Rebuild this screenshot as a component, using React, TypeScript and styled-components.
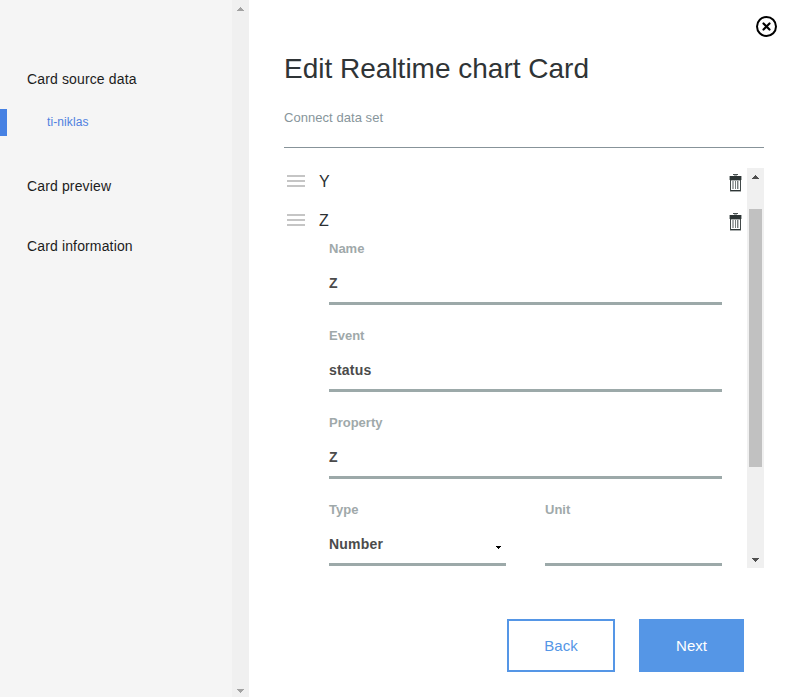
import React from "react";
import styled, { createGlobalStyle } from "styled-components";

const Global = createGlobalStyle`
  * { box-sizing: border-box; }
  html, body { margin: 0; padding: 0; overflow: hidden; background: #fff; }
  body { font-family: Arial, "Liberation Sans", sans-serif; color: #222; }
`;

const Page = styled.div`
  display: flex;
  width: 798px;
  height: 697px;
  overflow: hidden;
`;

const Sidebar = styled.aside`
  width: 232px;
  background: #f5f5f5;
  padding-top: 64px;
`;

const NavItem = styled.div<{ $gap?: number }>`
  height: 30px;
  line-height: 30px;
  padding-left: 27px;
  margin-bottom: ${(p) => p.$gap ?? 0}px;
  font-size: 14px;
  letter-spacing: 0.14px;
  color: #1c1c1c;
`;

const SubItem = styled.div`
  height: 27px;
  line-height: 27px;
  border-left: 7px solid #4681e3;
  padding-left: 40px;
  margin-bottom: 35px;
  font-size: 12px;
  letter-spacing: 0.1px;
  color: #4f80e0;
`;

const Track = styled.div`
  width: 17px;
  flex: none;
  display: flex;
  flex-direction: column;
  justify-content: space-between;
  background: #f0f0f0;
`;

const ArrowBox = styled.div<{ $top: number }>`
  height: 17px;
  padding: ${(p) => p.$top}px 5px 0 5px;
  line-height: 0;
`;

const Thumb = styled.div`
  width: 13px;
  height: 258px;
  margin: 24px 0 0 2px;
  background: #c1c1c1;
`;

const Spacer = styled.div`
  flex: 1;
`;

const Main = styled.main`
  flex: 1;
  display: flex;
  flex-direction: column;
  padding: 15px 20px 0 35px;
`;

const CloseButton = styled.button`
  align-self: flex-end;
  width: 23px;
  height: 23px;
  padding: 0;
  border: 0;
  background: none;
  line-height: 0;
`;

const Title = styled.h1`
  margin: 11px 0 0;
  height: 39px;
  line-height: 40px;
  font-size: 28px;
  font-weight: 400;
  color: #2f3436;
`;

const Caption = styled.div`
  width: 480px;
  height: 60px;
  padding-top: 22px;
  line-height: 16px;
  font-size: 13px;
  letter-spacing: 0.05px;
  color: #87959b;
  border-bottom: 1px solid #879399;
`;

const Panel = styled.section`
  display: flex;
  width: 480px;
  height: 400px;
  margin-top: 20px;
`;

const Content = styled.div`
  flex: 1;
  overflow: hidden;
`;

const Row = styled.div`
  display: flex;
  align-items: center;
  height: 26px;
  margin-bottom: 13px;
  padding: 0 5px 0 3px;
  font-size: 16px;
  color: #2b3033;

  & + & { margin-bottom: 0; }
  svg { display: block; }
`;

const RowName = styled.span`
  flex: 1;
  padding: 2px 0 0 14px;
`;

const TrashIcon = styled.svg`
  margin-top: 4px;
`;

const Form = styled.div`
  padding: 0 25px 0 45px;
`;

const Pair = styled.div`
  display: grid;
  grid-template-columns: 177px 177px;
  gap: 39px;
`;

const Field = styled.div`
  height: 87px;
  padding-top: 7px;
`;

const Label = styled.label`
  display: block;
  height: 17px;
  line-height: 17px;
  font-size: 13px;
  font-weight: 700;
  color: #9fa9aa;
`;

const Value = styled.div`
  display: flex;
  align-items: center;
  justify-content: space-between;
  height: 48px;
  padding-top: 6px;
  border-bottom: 3px solid #9ca9a9;
  font-size: 14px;
  font-weight: 700;
  letter-spacing: 0.2px;
  color: #4b4b4b;

  svg { margin: 8px 4px 0 0; }
`;

const Actions = styled.div`
  display: flex;
  justify-content: flex-end;
  gap: 24px;
  margin-top: 51px;
  padding-right: 34px;
`;

const Button = styled.button<{ $primary?: boolean }>`
  width: ${(p) => (p.$primary ? 105 : 108)}px;
  height: 53px;
  padding: 0;
  border: 2px solid #5596e6;
  background: ${(p) => (p.$primary ? "#5596e6" : "#fff")};
  color: ${(p) => (p.$primary ? "#fff" : "#5596e6")};
  font: 15px Arial, "Liberation Sans", sans-serif;
`;

const Arrow = ({ down, color, top = 6 }: { down?: boolean; color: string; top?: number }) => (
  <ArrowBox $top={top}>
    <svg width="7" height="4" shapeRendering="crispEdges" fill={color}>
      <path d={down ? "M0 0h7v1h-1v1h-1v1h-1v1h-1v-1h-1v-1h-1v-1h-1z" : "M3 0h1v1h1v1h1v1h1v1h-7v-1h1v-1h1v-1h1z"} />
    </svg>
  </ArrowBox>
);

const Handle = () => (
  <svg width="18" height="12" fill="#c5c5c5" shapeRendering="crispEdges">
    <path d="M0 0h18v2H0zM0 5h18v2H0zM0 10h18v2H0z" />
  </svg>
);

const Trash = () => (
  <TrashIcon width="13" height="18" shapeRendering="crispEdges">
    <path d="M4 0h5v1H4z" fill="#4a5252" />
    <path d="M0 2h1v4H0zM12 2h1v4h-1zM1 17h11v1H1zM5 1h3v1H5z" fill="#a9adad" />
    <path d="M1 2h11v4H1z" fill="#2d3535" />
    <path d="M1 6h1v11H1zM11 6h1v11h-1z" fill="#424949" />
    <path d="M2 16h9v1H2z" fill="#2d3535" />
    <path d="M2 6h9v1H2zM3 7h2v8H3z" fill="#a9adad" />
    <path d="M6 7h1v8H6zM8 7h1v8H8z" fill="#777d7d" />
    <path d="M9 7h1v8H9z" fill="#c2c6c6" />
  </TrashIcon>
);

const fields = [
  { label: "Name", value: "Z" },
  { label: "Event", value: "status" },
  { label: "Property", value: "Z" },
];

export default function App() {
  return (
    <Page>
      <Global />
      <Sidebar>
        <NavItem $gap={15}>Card source data</NavItem>
        <SubItem>ti-niklas</SubItem>
        <NavItem $gap={30}>Card preview</NavItem>
        <NavItem>Card information</NavItem>
      </Sidebar>
      <Track>
        <Arrow color="#a3a3a3" />
        <Arrow down color="#a3a3a3" top={8} />
      </Track>
      <Main>
        <CloseButton aria-label="Close">
          <svg width="23" height="23" fill="none" stroke="#000">
            <circle cx="11.5" cy="11.5" r="9.5" strokeWidth="2" />
            <path d="M8.5 8.5l6 6M14.5 8.5l-6 6" strokeWidth="2.2" strokeLinecap="round" />
          </svg>
        </CloseButton>
        <Title>Edit Realtime chart Card</Title>
        <Caption>Connect data set</Caption>
        <Panel>
          <Content>
            {["Y", "Z"].map((name) => (
              <Row key={name}>
                <Handle />
                <RowName>{name}</RowName>
                <Trash />
              </Row>
            ))}
            <Form>
              {fields.map((f) => (
                <Field key={f.label}>
                  <Label>{f.label}</Label>
                  <Value>{f.value}</Value>
                </Field>
              ))}
              <Pair>
                <Field>
                  <Label>Type</Label>
                  <Value>
                    Number
                    <svg width="7" height="3" shapeRendering="crispEdges">
                      <path d="M1 0h5v1h-1v1h-1v1h-1v-1h-1v-1h-1z" fill="#000" />
                    </svg>
                  </Value>
                </Field>
                <Field>
                  <Label>Unit</Label>
                  <Value />
                </Field>
              </Pair>
            </Form>
          </Content>
          <Track>
            <Arrow color="#505050" />
            <Thumb />
            <Spacer />
            <Arrow down color="#505050" />
          </Track>
        </Panel>
        <Actions>
          <Button>Back</Button>
          <Button $primary>Next</Button>
        </Actions>
      </Main>
    </Page>
  );
}
